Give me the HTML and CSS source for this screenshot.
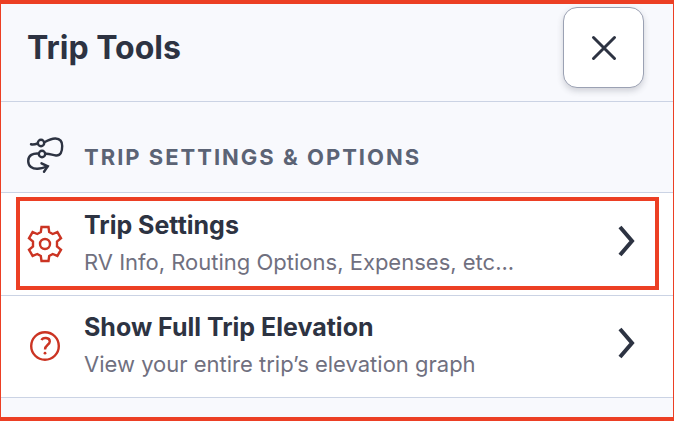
FILE: index.html
```
<!DOCTYPE html>
<html lang="en">
<head>
  <meta charset="UTF-8">
  <meta name="viewport" content="width=device-width, initial-scale=1">
  <title>Trip Tools</title>
  <link rel="stylesheet" href="styles.css">
</head>
<body>
  <main class="panel">
    <header class="panel-header">
      <h1>Trip Tools</h1>
      <button type="button" class="close" aria-label="Close">
        <svg width="26" height="26" viewBox="0 0 26 26">
          <path d="M2.5 2.5L23.5 23.5M23.5 2.5L2.5 23.5"/>
        </svg>
      </button>
    </header>

    <div class="section-title">
      <svg class="icon route" viewBox="0 0 40 40">
        <path d="M6 9.3C8.5 9.8 10 9.4 12.7 8.5"/>
        <circle cx="16" cy="8" r="3.2"/>
        <path d="M19.4 7.2C23 5.2 26.5 3.3 30.5 3.5C35 3.8 37.3 6.5 37.2 11C37.2 17 35.5 20.8 31 20.5C27 20 24.5 18.5 20.5 18.8"/>
        <circle cx="17" cy="19" r="3.2"/>
        <path d="M13.6 18.6C8 18.2 3.2 20 3.2 26C3.2 31.5 7.5 34 12.5 33.8C16 33.6 19 32.6 22.5 31.4"/>
        <path d="M16.5 28.3L22.8 31.3L19 36.8"/>
      </svg>
      <h2>TRIP SETTINGS &amp; OPTIONS</h2>
    </div>

    <nav class="tools">
      <a href="#settings" class="tool highlighted">
        <svg class="icon" viewBox="0 0 40 40">
          <path d="M16.5 3H23.5L24.2 8L27.7 10L32.4 8.1L36 14.3L32 17.5V22.5L36 25.7L32.4 31.9L27.7 30L24.2 32L23.5 37H16.5L15.8 32L12.3 30L7.6 31.9L4 25.7L8 22.5V17.5L4 14.3L7.6 8.1L12.3 10L15.8 8Z"/>
          <circle cx="20" cy="20" r="5"/>
        </svg>
        <span class="text">
          <span class="name">Trip Settings</span>
          <span class="info">RV Info, Routing Options, Expenses, etc...</span>
        </span>
        <svg class="arrow" width="20" height="40" viewBox="0 0 20 40">
          <path d="M4 3L16 17L4 31"/>
        </svg>
      </a>
      <a href="#elevation" class="tool">
        <svg class="icon" viewBox="0 0 40 40">
          <circle cx="20" cy="20" r="13.8"/>
          <path d="M16.6 14.2C17.5 11.4 24.8 10.8 24.8 15.6C24.8 18.8 20 18.9 20 23.6"/>
          <circle class="dot" cx="20" cy="27.2" r="1.4"/>
        </svg>
        <span class="text">
          <span class="name">Show Full Trip Elevation</span>
          <span class="info">View your entire trip’s elevation graph</span>
        </span>
        <svg class="arrow" width="20" height="40" viewBox="0 0 20 40">
          <path d="M4 3L16 17L4 31"/>
        </svg>
      </a>
    </nav>
  </main>
</body>
</html>
```

FILE: styles.css
```
* {
  box-sizing: border-box;
}

body {
  font-family: Inter, "Liberation Sans", sans-serif;
  font-optical-sizing: none;
  color: #2d3342;
  background-color: #fff;
  margin: 0;
  padding-bottom: 1px;
}

h1, h2 {
  margin: 0;
}

svg {
  display: block;
  flex: none;
  fill: none;
  stroke: currentColor;
}

.panel {
  background-color: #f8f9fd;
  border: 1px solid #ec3f24;
  border-width: 4px 1px;
  padding-bottom: 19px;
}

.panel-header {
  display: flex;
  justify-content: space-between;
  align-items: center;
  padding: 3px 29px 13px 26px;
  border-bottom: 1px solid #cbd3e4;
}

h1 {
  font-size: 32px;
  line-height: 40px;
  font-weight: 700;
}

.close {
  display: flex;
  justify-content: center;
  align-items: center;
  width: 81px;
  height: 81px;
  padding: 0;
  color: inherit;
  background-color: #fff;
  border: 1px solid #9ba1b3;
  border-radius: 14px;
  box-shadow: 0 3px 6px rgba(45, 51, 66, 0.2);
  cursor: pointer;
}

.close svg {
  stroke-width: 3;
  stroke-linecap: round;
}

.section-title {
  display: flex;
  align-items: center;
  gap: 19px;
  padding: 31px 24px 15px;
  border-bottom: 1px solid #cbd3e4;
}

h2 {
  color: #5b6375;
  font-size: 22px;
  line-height: 40px;
  font-weight: 700;
  letter-spacing: 2px;
  padding-top: 4px;
}

.icon {
  width: 40px;
  height: 40px;
  color: #cb3423;
  stroke-width: 2.4;
}

.route {
  color: #2d3342;
  stroke-linecap: round;
}

.dot {
  fill: currentColor;
  stroke: none;
}

.tool {
  position: relative;
  display: flex;
  align-items: center;
  gap: 19px;
  padding: 14px 37px 14px 24px;
  color: inherit;
  text-decoration: none;
  background-color: #fff;
  border-bottom: 1px solid #cbd3e4;
}

.tool:last-child {
  padding-top: 13px;
}

.highlighted::after {
  content: "";
  position: absolute;
  inset: 4px 14px 5px 15px;
  border: 4px solid #ec3f24;
}

.text {
  flex: 1;
}

.name, .info {
  display: block;
  line-height: 37px;
}

.name {
  font-size: 25px;
  font-weight: 700;
}

.info {
  color: #70707f;
  font-size: 22px;
}

.arrow {
  stroke-width: 4;
}
```
